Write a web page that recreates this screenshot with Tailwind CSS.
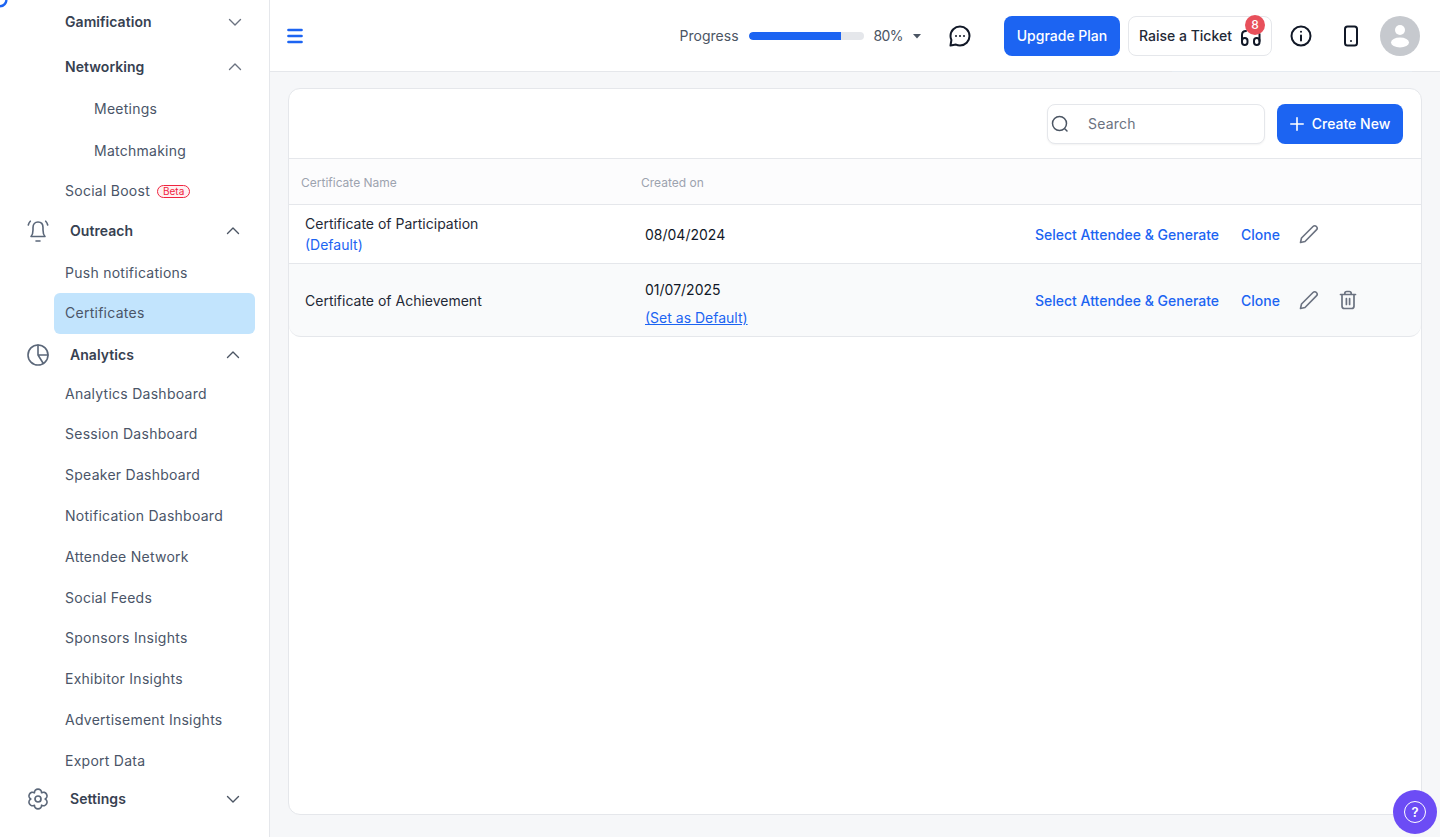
<!DOCTYPE html>
<html lang="en">
<head>
  <meta charset="UTF-8" />
  <title>Certificates</title>
  <script src="https://cdn.jsdelivr.net/npm/@tailwindcss/browser@4"></script>
</head>
<body class="h-[837px] overflow-hidden bg-[#f6f7f9] font-['Inter',sans-serif] text-sm text-[#111827]">
  <div class="flex h-[837px]">

    <!-- sidebar -->
    <aside class="relative w-[270px] shrink-0 overflow-hidden border-r border-[#e5e7eb] bg-white text-[#4a5568] tracking-[0.26px]">
      <svg class="absolute left-0 top-0" width="8" height="8" viewBox="0 0 8 8" fill="none"><path d="M6.500 0C6 3.500 3.500 6 0 6.300" stroke="#1c64f2" stroke-width="2.400"/></svg>

      <div class="flex h-[44px] items-center justify-between pl-[65px] pr-[26px] font-semibold tracking-[0.05px] text-[#374151]">
        <span>Gamification</span>
        <svg class="size-4" viewBox="0 0 16 16" fill="none" stroke="#6b7280" stroke-width="1.400" stroke-linecap="round" stroke-linejoin="round"><path d="M2.500 5.500 8 11l5.500-5.500"/></svg>
      </div>
      <div class="flex h-[45px] items-center justify-between pl-[65px] pr-[26px] font-semibold tracking-[0.05px] text-[#374151]">
        <span>Networking</span>
        <svg class="size-4" viewBox="0 0 16 16" fill="none" stroke="#6b7280" stroke-width="1.400" stroke-linecap="round" stroke-linejoin="round"><path d="M2.500 10.500 8 5l5.500 5.500"/></svg>
      </div>
      <div class="flex h-[41px] items-center pb-[2px] pl-[94px]">Meetings</div>
      <div class="flex h-[42px] items-center pl-[94px]">Matchmaking</div>
      <div class="flex h-[38px] items-center pl-[65px]">
        <span>Social Boost</span>
        <span class="ml-[7px] rounded-full border border-[#f0243f] bg-[#fff1f2] px-[5px] text-[10px] leading-[11px] tracking-normal text-[#f0243f]">Beta</span>
      </div>
      <div class="flex h-[40px] items-center justify-between pl-[27px] pr-[28px] pt-[1px] font-semibold tracking-[0.05px] text-[#374151]">
        <span class="flex items-center gap-[21px]">
          <svg class="size-[22px] shrink-0" viewBox="0 0 22 22" fill="none" stroke="#5b6779" stroke-width="1.600" stroke-linecap="round" stroke-linejoin="round"><path d="M4 16.500C5.500 15 6 13 6 10V7.500C6 4 8 2 11 2s5 2 5 5.500V10c0 3 .5 5 2 6.500z"/><path d="M9 21h4M1.300 5C1.600 3.500 2.300 2.200 3.300 1.200M20.700 5c-.3-1.500-1-2.800-2-3.800"/></svg>
          Outreach
        </span>
        <svg class="size-4" viewBox="0 0 16 16" fill="none" stroke="#4b5563" stroke-width="1.400" stroke-linecap="round" stroke-linejoin="round"><path d="M2.500 10.500 8 5l5.500 5.500"/></svg>
      </div>
      <div class="flex h-[43px] items-center pl-[65px] pt-[2px]">Push notifications</div>
      <div class="ml-[54px] flex h-[41px] w-[201px] items-center rounded-md bg-[#c2e4fd] pb-[2px] pl-[11px]">Certificates</div>
      <div class="flex h-[40px] items-center justify-between pl-[27px] pr-[28px] pt-[2px] font-semibold tracking-[0.05px] text-[#374151]">
        <span class="flex items-center gap-[21px]">
          <svg class="size-[22px] shrink-0" viewBox="0 0 22 22" fill="none" stroke="#5b6779" stroke-width="1.600" stroke-linecap="round" stroke-linejoin="round"><circle cx="11" cy="11" r="10"/><path d="M11 1v10h10M11 11l5 8"/></svg>
          Analytics
        </span>
        <svg class="size-4" viewBox="0 0 16 16" fill="none" stroke="#4b5563" stroke-width="1.400" stroke-linecap="round" stroke-linejoin="round"><path d="M2.500 10.500 8 5l5.500 5.500"/></svg>
      </div>
      <div class="flex h-[40px] items-center pl-[65px]">Analytics Dashboard</div>
      <div class="flex h-[40px] items-center pl-[65px]">Session Dashboard</div>
      <div class="flex h-[41px] items-center pl-[65px]">Speaker Dashboard</div>
      <div class="flex h-[41px] items-center pl-[65px]">Notification Dashboard</div>
      <div class="flex h-[41px] items-center pl-[65px]">Attendee Network</div>
      <div class="flex h-[41px] items-center pl-[65px]">Social Feeds</div>
      <div class="flex h-[40px] items-center pl-[65px]">Sponsors Insights</div>
      <div class="flex h-[41px] items-center pl-[65px]">Exhibitor Insights</div>
      <div class="flex h-[41px] items-center pl-[65px]">Advertisement Insights</div>
      <div class="flex h-[41px] items-center pl-[65px]">Export Data</div>
      <div class="flex h-[36px] items-center justify-between pl-[27px] pr-[28px] font-semibold tracking-[0.05px] text-[#374151]">
        <span class="flex items-center gap-[21px]">
          <svg class="size-[22px] shrink-0" viewBox="0 0 22 22" fill="none" stroke="#5b6779" stroke-width="1.700" stroke-linecap="round" stroke-linejoin="round"><path d="M7.400 4.760A3.600 3.600 0 0 1 14.600 4.760 3.600 3.600 0 0 1 18.200 11 3.600 3.600 0 0 1 14.600 17.240 3.600 3.600 0 0 1 7.400 17.240 3.600 3.600 0 0 1 3.800 11 3.600 3.600 0 0 1 7.400 4.760Z"/><circle cx="11" cy="11" r="3"/></svg>
          Settings
        </span>
        <svg class="size-4" viewBox="0 0 16 16" fill="none" stroke="#4b5563" stroke-width="1.400" stroke-linecap="round" stroke-linejoin="round"><path d="M2.500 5.500 8 11l5.500-5.500"/></svg>
      </div>
    </aside>

    <div class="relative flex min-w-0 flex-1 flex-col">
      <!-- top bar -->
      <header class="relative flex h-[72px] shrink-0 items-center justify-between border-b border-[#e5e7eb] bg-white pl-[17px] pr-5">
        <svg class="size-4" viewBox="0 0 16 16" fill="none" stroke="#1c64f2" stroke-width="2.700" stroke-linecap="round"><path d="M1.500 2h13M1.500 8h13M1.500 14h13"/></svg>

        <div class="flex items-center">
          <span class="text-[#4b5563]">Progress</span>
          <div class="ml-[10px] h-2 w-[115px] overflow-hidden rounded-full bg-[#e5e7eb]">
            <div class="h-full rounded-l-full bg-[#1c64f2]" style="width: 80%"></div>
          </div>
          <span class="ml-[10px] text-[#4b5563] tracking-[-0.6px]">80%</span>
          <svg class="ml-[9px] size-[10px]" viewBox="0 0 10 10" fill="#4b5563"><path d="M1 3h8L5 7.500z"/></svg>

          <svg class="ml-[27px] size-[22px]" viewBox="0 0 22 22" fill="none" stroke="#111827" stroke-width="2" stroke-linecap="round" stroke-linejoin="round">
            <path d="M11 1.500c5.200 0 9.500 4.200 9.500 9.500s-4.300 9.500-9.500 9.500c-1.400 0-2.800-.3-4-.9l-5.500.9.900-5.500c-.6-1.200-.9-2.600-.9-4C1.500 5.700 5.800 1.500 11 1.500z"/>
            <path d="M7 11h.01M11 11h.01M15 11h.01"/>
          </svg>

          <button class="ml-[33px] h-10 w-[116px] rounded-lg bg-[#1c64f2] font-medium text-white">Upgrade Plan</button>

          <div class="relative ml-2 flex h-10 w-[144px] items-center rounded-lg border border-[#e5e7eb] bg-white pl-[10px] font-medium text-[#1f2937]">
            <span>Raise a Ticket</span>
            <svg class="absolute left-[111px] top-[10px] size-[22px]" viewBox="0 0 22 22" fill="none" stroke="#111827" stroke-width="2" stroke-linecap="round"><path d="M2 14V8c0-2.500 1.500-4 4-4M19.500 14V7"/><rect x="2" y="11" width="5.500" height="7" rx="2.700"/><rect x="14" y="11" width="5.500" height="7" rx="2.700"/></svg>
            <span class="absolute left-[116px] top-[-2px] flex size-5 items-center justify-center rounded-full bg-[#e8505b] text-xs text-white">8</span>
          </div>

          <svg class="ml-[18px] size-[22px]" viewBox="0 0 22 22" fill="none" stroke="#111827" stroke-width="2" stroke-linecap="round"><circle cx="11" cy="11" r="9.500"/><path d="M11 10.500V15.500M11 6.800h.01"/></svg>

          <svg class="ml-[28px] size-[22px]" viewBox="0 0 22 22" fill="none" stroke="#111827" stroke-width="2" stroke-linecap="round" stroke-linejoin="round"><rect x="5" y="1.500" width="12" height="19" rx="2.500"/><path d="M11 16h.01"/></svg>

          <div class="ml-[18px] flex size-10 items-center justify-center overflow-hidden rounded-full bg-[#c6c9ce]">
            <svg class="size-6" viewBox="0 0 24 24" fill="#fff"><circle cx="12" cy="6" r="5"/><ellipse cx="12" cy="18.500" rx="9" ry="5"/></svg>
          </div>
        </div>
        <div class="absolute left-[902px] top-[71px] h-px w-[240px] bg-[#e6ebf1]"></div>
      </header>

      <!-- content card -->
      <main class="mb-[22px] ml-[18px] mr-[18px] mt-4 flex min-h-0 flex-1 flex-col rounded-xl border border-[#e5e7eb] bg-white">
        <div class="flex h-[69px] shrink-0 items-center justify-end pr-[18px]">
          <div class="flex h-10 w-[218px] items-center rounded-lg border border-[#e5e7eb] bg-white shadow-xs">
            <svg class="ml-[2px] size-[20px]" viewBox="0 0 20 20" fill="none" stroke="#4b5563" stroke-width="1.500" stroke-linecap="round"><circle cx="9.500" cy="9.500" r="7"/><path d="m15 15 2 2"/></svg>
            <span class="ml-[18px] text-[#6b7280] tracking-[0.2px]">Search</span>
          </div>
          <button class="ml-3 flex h-10 w-[126px] items-center justify-center gap-2 rounded-lg bg-[#1c64f2] font-medium text-white">
            <svg class="size-[14px]" viewBox="0 0 14 14" fill="none" stroke="#fff" stroke-width="1.600" stroke-linecap="round"><path d="M7 .8v12.400M.8 7h12.400"/></svg>
            Create New
          </button>
        </div>

        <div class="flex h-[47px] shrink-0 items-center border-y border-[#e5e7eb] bg-[#fcfcfd] pt-[3px] text-xs text-[#9ca3af]">
          <div class="w-[352px] pl-3">Certificate Name</div>
          <div>Created on</div>
        </div>

        <div class="flex h-[59px] shrink-0 items-center border-b border-[#e5e7eb] pt-[2px]">
          <div class="w-[352px] pb-[2px] pl-4">
            <div class="leading-[21px] text-[#1f2937]">Certificate of Participation</div>
            <div class="leading-[21px] text-[#1c64f2]">(Default)</div>
          </div>
          <div class="w-[394px] pl-1 text-[#111827]">08/04/2024</div>
          <div class="flex items-center font-medium text-[#1c64f2]">
            <a class="w-[206px]">Select Attendee &amp; Generate</a>
            <a class="w-[58px]">Clone</a>
            <svg class="size-5 -translate-y-px" viewBox="0 0 20 20" fill="none" stroke="#6b7280" stroke-width="1.600" stroke-linejoin="round"><path d="M1.500 18.500l1-4.500L14 2.500a2.400 2.400 0 0 1 3.400 3.400L6 17.500z"/></svg>
          </div>
        </div>

        <div class="flex h-[73px] shrink-0 items-center rounded-b-xl border-b border-[#e5e7eb] bg-[#f9fafb] pt-[2px]">
          <div class="w-[352px] pl-4 text-[#1f2937]">Certificate of Achievement</div>
          <div class="w-[394px] pl-1 pt-[6px]">
            <div class="leading-5 text-[#111827]">01/07/2025</div>
            <a class="mt-2 block leading-5 text-[#1c64f2] underline">(Set as Default)</a>
          </div>
          <div class="flex items-center font-medium text-[#1c64f2]">
            <a class="w-[206px]">Select Attendee &amp; Generate</a>
            <a class="w-[58px]">Clone</a>
            <svg class="size-5 -translate-y-px" viewBox="0 0 20 20" fill="none" stroke="#6b7280" stroke-width="1.600" stroke-linejoin="round"><path d="M1.500 18.500l1-4.500L14 2.500a2.400 2.400 0 0 1 3.400 3.400L6 17.500z"/></svg>
            <svg class="ml-[19px] size-5 -translate-y-px" viewBox="0 0 20 20" fill="none" stroke="#6b7280" stroke-width="1.700" stroke-linecap="round" stroke-linejoin="round"><path d="M2.500 4.500h15M6.800 4.500V3.500c0-1.200 1-2 2-2h2.400c1 0 2 .8 2 2v1M4 4.500v11.500c0 1.400 1 2.500 2.400 2.500h7.200c1.400 0 2.400-1.100 2.400-2.500V4.500M8.400 8.500v6M11.600 8.500v6"/></svg>
          </div>
        </div>
      </main>

      <!-- help bubble -->
      <button class="absolute bottom-[3px] right-[3px] flex size-11 items-center justify-center rounded-full bg-[#6c4cf5]">
        <span class="flex size-[22px] items-center justify-center rounded-full border border-white text-[13px] font-semibold text-white">?</span>
      </button>
    </div>
  </div>
</body>
</html>
